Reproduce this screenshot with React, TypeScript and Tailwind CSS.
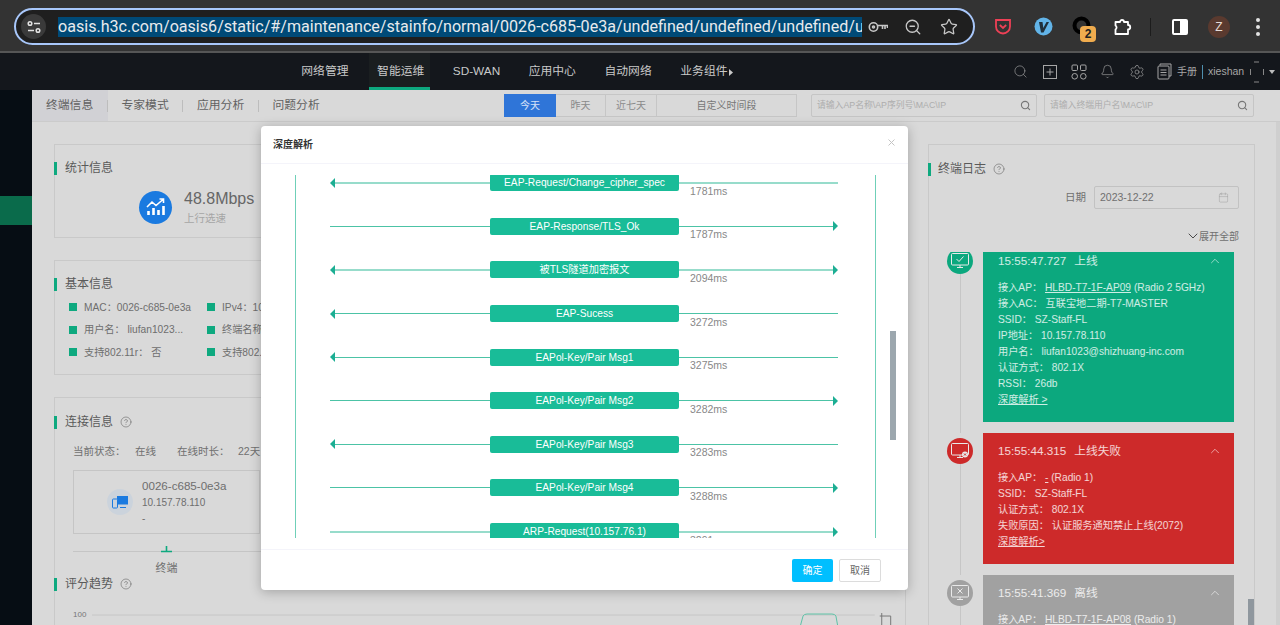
import { ZoomOut, Star, Search, Bell, Settings, ChevronUp, ChevronDown, Calendar, CircleHelp } from "lucide-react";

const font = { fontFamily: '"Liberation Sans", "Noto Sans CJK SC", sans-serif' };

const flows = [
  { label: "EAP-Request/Change_cipher_spec", ms: "1781ms", left: true, right: false, thick: true },
  { label: "EAP-Response/TLS_Ok", ms: "1787ms", left: false, right: true, thick: false },
  { label: "被TLS隧道加密报文", ms: "2094ms", left: true, right: true, thick: true },
  { label: "EAP-Sucess", ms: "3272ms", left: true, right: false, thick: false },
  { label: "EAPol-Key/Pair Msg1", ms: "3275ms", left: true, right: false, thick: false },
  { label: "EAPol-Key/Pair Msg2", ms: "3282ms", left: false, right: true, thick: false },
  { label: "EAPol-Key/Pair Msg3", ms: "3283ms", left: true, right: false, thick: false },
  { label: "EAPol-Key/Pair Msg4", ms: "3288ms", left: false, right: true, thick: false },
  { label: "ARP-Request(10.157.76.1)", ms: "3291ms", left: false, right: true, thick: true },
];

function Arrow({ dir }: { dir: "l" | "r" }) {
  return (
    <svg width="5" height="10" viewBox="0 0 5 10" className="shrink-0">
      <path d={dir === "l" ? "M5 0 L0 5 L5 10 Z" : "M0 0 L5 5 L0 10 Z"} fill="#1cae93" />
    </svg>
  );
}

function SectionTitle({ text, help, tight }: { text: string; help?: boolean; tight?: boolean }) {
  return (
    <div className="flex items-center h-[14px] -ml-px">
      <div className="w-[3px] h-[13px] bg-[#0ea97f]" />
      <span className={`text-[12px] leading-[14px] text-[#5a5a5a] ${tight ? "ml-[7px]" : "ml-2"}`}>{text}</span>
      {help && <CircleHelp size={12} strokeWidth={1.2} className="ml-[7px] text-[#666]" />}
    </div>
  );
}

function InfoItem({ text }: { text: string }) {
  return (
    <div className="flex items-center w-[138px] h-[22.5px] whitespace-nowrap shrink-0">
      <div className="w-2 h-2 bg-[#0ea97f] shrink-0" />
      <span className="ml-[7px] text-[10.2px] text-[#6e6e6e]">{text}</span>
    </div>
  );
}

function LogCard({
  time,
  title,
  rows,
  color,
  circle,
  mark,
}: {
  time: string;
  title: string;
  rows: React.ReactNode[];
  color: string;
  circle: string;
  mark: "ok" | "fail" | "off";
}) {
  return (
    <div className="flex pb-[11px]">
      <div className="w-[26px] flex flex-col items-center shrink-0">
        <div className={`w-[26px] h-[26px] rounded-full mt-[5px] flex items-center justify-center shrink-0 ${circle}`}>
          <svg width="18" height="16" viewBox="0 0 18 16" fill="none" stroke="#e9e9e9" strokeWidth="1">
            <rect x="0.5" y="0.5" width="17" height="11.5" rx="1" />
            <path d="M6 14.5 H12 M9 12 V14.5" />
            {mark === "ok" && <path d="M5.5 6 L8 8.5 L12.5 3.5" />}
            {mark === "off" && <path d="M6.5 3.5 L11.5 8.5 M11.5 3.5 L6.5 8.5" />}
            {mark === "fail" && <circle cx="14" cy="11.5" r="3" fill="#e9e9e9" stroke="none" />}
            {mark === "fail" && <path d="M13 10.5 L15 12.5 M15 10.5 L13 12.5" stroke="#cd2a2a" />}
          </svg>
        </div>
        <div className="w-px flex-1 bg-[#c6c6c6] -mb-[11px]" />
      </div>
      <div className={`ml-[10px] w-[251px] px-[15px] pb-[14px] text-white/80 ${color}`}>
        <div className="h-[37px] pb-px flex items-center justify-between text-[11.7px]">
          <span>
            {time}
            <span className="ml-2">{title}</span>
          </span>
          <ChevronUp size={14} strokeWidth={1.2} className="-mr-[3px]" />
        </div>
        <div className="text-[10.2px] leading-4 whitespace-nowrap">
          {rows.map((r, i) => (
            <div key={i}>{r}</div>
          ))}
        </div>
      </div>
    </div>
  );
}

export default function App() {
  return (
    <div style={font} className="w-[1280px] h-[625px] overflow-hidden relative bg-[#d9d9d9]">
      {/* chrome toolbar */}
      <div className="h-[53px] bg-[#333333] border-b-2 border-[#565656] pt-[2px] flex items-center">
        <div className="ml-[14px] w-[961px] h-[37px] rounded-full border-2 border-[#a8c7fa] bg-[#1f1f1f] flex items-center">
          <div className="ml-[5px] w-[25px] h-[25px] rounded-full bg-[#3a3a3a] flex items-center justify-center shrink-0">
            <svg width="14" height="14" viewBox="0 0 14 14" fill="none" stroke="#e3e3e3" strokeWidth="1.5">
              <circle cx="3" cy="3.5" r="1.8" />
              <path d="M7 3.5 H13 M1 10.5 H7" />
              <circle cx="11" cy="10.5" r="1.8" />
            </svg>
          </div>
          <div className="ml-3 w-[804px] h-[20px] bg-[#004a77] overflow-hidden shrink-0">
            <div className="text-[16.1px] leading-[20px] text-[#e8eaed] whitespace-nowrap" style={{ fontFamily: "Roboto, sans-serif" }}>
              oasis.h3c.com/oasis6/static/#/maintenance/stainfo/normal/0026-c685-0e3a/undefined/undefined/undefined/undefined
            </div>
          </div>
          <svg width="20" height="12" viewBox="0 0 20 12" fill="none" stroke="#c7c7c7" strokeWidth="1.6" className="ml-[6px] shrink-0">
            <circle cx="5.5" cy="6" r="4.2" />
            <circle cx="5.5" cy="6" r="1" />
            <path d="M10 4.5 H19.5 V7 M14.5 4.5 V8 M17 4.5 V8" />
          </svg>
          <ZoomOut size={18} strokeWidth={1.7} className="ml-[16px] text-[#c7c7c7] shrink-0" />
          <Star size={18} strokeWidth={1.7} className="ml-[18px] text-[#c7c7c7] shrink-0" />
        </div>
        <div className="ml-[16px] w-6 h-6 flex items-center justify-center shrink-0">
          <svg width="18" height="18" viewBox="0 0 18 18" fill="none" stroke="#ee4056" strokeWidth="1.8">
            <path d="M2 2 H16 V8.5 A7 7 0 0 1 2 8.5 Z" />
            <path d="M5.8 7 L9 10 L12.2 7" />
          </svg>
        </div>
        <div className="ml-4 w-6 h-6 flex items-center justify-center shrink-0">
          <svg width="19" height="19" viewBox="0 0 19 19">
            <circle cx="9.5" cy="9.5" r="9" fill="#62b4e8" />
            <path d="M5 5 H8.5 L9.3 11 L12.5 5 H15 L9.5 15.5 H7 Z" fill="#20303c" />
          </svg>
        </div>
        <div className="ml-4 w-6 h-6 relative shrink-0">
          <svg width="19" height="19" viewBox="0 0 19 19" className="absolute left-[1px] top-[1px]">
            <circle cx="9.5" cy="9.5" r="7" fill="none" stroke="#000" strokeWidth="4" />
          </svg>
          <div className="absolute left-[9px] top-[11px] w-4 h-4 rounded-[4px] bg-[#f0ac4e] text-[#222] text-[12px] font-bold leading-4 text-center">2</div>
        </div>
        <div className="ml-4 w-6 h-6 flex items-center justify-center shrink-0">
          <svg width="18" height="18" viewBox="0 0 18 18" fill="none" stroke="#fff" strokeWidth="1.8" strokeLinejoin="round">
            <path d="M1.5 4 H6 A2 2 0 0 1 10 4 H14 V7 A2 2 0 0 1 14 11.5 V16 H1.5 V11.5 A2.4 2.4 0 0 0 1.5 7.5 Z" />
          </svg>
        </div>
        <div className="ml-[15px] w-px h-[18px] bg-[#1c1c1c] shrink-0" />
        <div className="ml-[17px] w-6 h-6 flex items-center justify-center shrink-0">
          <div className="w-4 h-4 rounded-[2px] border-2 border-white flex justify-end">
            <div className="w-[6px] bg-white" />
          </div>
        </div>
        <div className="ml-4 w-[22px] h-[22px] rounded-full bg-[#5a3a2f] text-[#e6dcd8] text-[12px] leading-[22px] text-center shrink-0">Z</div>
        <div className="ml-[26px] flex flex-col gap-[3px] shrink-0">
          <div className="w-1 h-1 rounded-full bg-[#e3e3e3]" />
          <div className="w-1 h-1 rounded-full bg-[#e3e3e3]" />
          <div className="w-1 h-1 rounded-full bg-[#e3e3e3]" />
        </div>
      </div>

      {/* app nav */}
      <div className="h-[37px] bg-[#14171c] flex pl-[287px] text-[11.8px] text-[#c9c9c9]">
        {["网络管理", "智能运维", "SD-WAN", "应用中心", "自动网络", "业务组件"].map((item, i) => (
          <div key={item} className="w-[75.8px] flex justify-center">
            <div className={`flex items-center justify-center whitespace-nowrap relative ${i === 1 ? "w-[61px] mr-[2px] pl-[2px] bg-[#1a1e20] border-b-[3px] border-[#0ea97f] pt-[3px]" : ""}`}>
              {item}
              {i === 5 && (
                <svg width="4" height="7" viewBox="0 0 4 7" className="absolute -right-[6px] top-[16px]">
                  <path d="M0 0 L4 3.5 L0 7 Z" fill="#c9c9c9" />
                </svg>
              )}
            </div>
          </div>
        ))}
        <div className="ml-auto w-[274px] flex items-center text-[#a6a6a6]">
          <div className="w-[29px] flex justify-center"><Search size={15} strokeWidth={1} /></div>
          <div className="w-[29px] flex justify-center">
            <svg width="14" height="14" viewBox="0 0 14 14" fill="none" stroke="currentColor">
              <rect x="0.5" y="0.5" width="13" height="13" />
              <path d="M7 3.5 V10.5 M3.5 7 H10.5" />
            </svg>
          </div>
          <div className="w-[29px] flex justify-center">
            <svg width="16" height="16" viewBox="0 0 16 16" fill="none" stroke="currentColor">
              <rect x="1" y="1" width="5.5" height="5.5" rx="1" />
              <rect x="9.5" y="1" width="5.5" height="5.5" rx="1" />
              <circle cx="3.7" cy="12.3" r="2.8" />
              <circle cx="12.3" cy="12.3" r="2.8" />
            </svg>
          </div>
          <div className="w-[29px] flex justify-center"><Bell size={15} strokeWidth={1} /></div>
          <div className="w-[29px] flex justify-center"><Settings size={16} strokeWidth={1} /></div>
          <div className="w-[26px] flex justify-center">
            <svg width="15" height="17" viewBox="0 0 15 17" fill="none" stroke="currentColor">
              <path d="M3 2.5 V1 H14 V13 H12" />
              <rect x="1" y="3" width="11" height="13" rx="1" />
              <path d="M3.5 7 H9.5 M3.5 9.5 H9.5 M3.5 12 H9.5" />
            </svg>
          </div>
          <span className="text-[10px] w-5">手册</span>
          <div className="ml-[5px] w-px h-[14px] bg-[#4f8fae]" />
          <span className="ml-[5px] text-[10.5px] w-[36px]">xieshan</span>
          <svg width="14" height="22" viewBox="0 0 14 22" fill="none" stroke="#888" className="ml-[6px]">
            <path d="M4 1 H9 M4 21 H9 M0.5 8 V14 M13.5 8 V14" />
          </svg>
          <svg width="6" height="4" viewBox="0 0 6 4" className="ml-[5px]">
            <path d="M0 0 H6 L3 4 Z" fill="#bdbdbd" />
          </svg>
        </div>
      </div>

      {/* page */}
      <div className="flex h-[535px]">
        <div className="w-8 bg-[#060d14] pt-[106px] shrink-0">
          <div className="h-[29px] bg-[#0a6b4b]" />
        </div>
        <div className="flex-1 flex flex-col">
          <div className="h-8 border-b border-[#cbcbcb] flex items-start shrink-0">
            {["终端信息", "专家模式", "应用分析", "问题分析"].map((tab, i) => (
              <div key={tab} className={`w-[75.5px] h-[31px] flex items-center justify-between pl-[14px] text-[11.8px] text-[#626262] ${i === 0 ? "bg-[#d1d1d5]" : ""}`}>
                {tab}
                {i < 3 && <div className="w-px h-3 bg-[#bdbdbd]" />}
              </div>
            ))}
            <div className="ml-[170px] mt-1 flex h-[23px] text-[10px] text-[#8a8a8a]">
              <div className="w-[52px] bg-[#2f75d8] text-white/80 flex items-center justify-center">今天</div>
              <div className="w-[50px] border border-l-0 border-[#c6c6c6] flex items-center justify-center">昨天</div>
              <div className="w-[51px] border border-l-0 border-[#c6c6c6] flex items-center justify-center">近七天</div>
              <div className="w-[140px] border border-l-0 border-[#c6c6c6] flex items-center justify-center text-[#777]">自定义时间段</div>
            </div>
            <div className="ml-[14px] mt-1 w-[226px] h-[23px] border border-[#c5c5c5] rounded-[2px] flex items-center justify-between px-[5px] text-[8.8px] text-[#adadad]">
              请输入AP名称\AP序列号\MAC\IP
              <Search size={11} strokeWidth={2.4} className="text-[#777]" />
            </div>
            <div className="ml-[7px] mt-1 w-[210px] h-[23px] border border-[#c5c5c5] rounded-[2px] flex items-center justify-between px-[5px] text-[8.8px] text-[#adadad]">
              请输入终端用户名\MAC\IP
              <Search size={11} strokeWidth={2.4} className="text-[#777]" />
            </div>
          </div>

          <div className="flex-1 flex pl-[22px] pt-[22px] overflow-hidden">
            <div className="w-[852px] flex flex-col shrink-0">
              <div className="h-[94px] border border-[#c9c9c9] pt-4 shrink-0">
                <SectionTitle text="统计信息" />
                <div className="flex items-center ml-[84px] mt-[14px]">
                  <div className="w-[33px] h-[33px] rounded-full bg-[#1a7ae0] flex items-center justify-center">
                    <svg width="20" height="18" viewBox="0 0 20 18" fill="none" stroke="#fff">
                      <path d="M1 9 L6 4 L10 7.5 L17 1.5 M13.5 1 H17.5 V5" strokeWidth="1.6" />
                      <path d="M2.5 13 V17 M7.5 10 V17 M12.5 12 V17 M17.5 8 V17" strokeWidth="2.6" />
                    </svg>
                  </div>
                  <div className="ml-3">
                    <div className="text-[16px] leading-[20px] text-[#666]">48.8Mbps</div>
                    <div className="text-[10.5px] leading-[14px] mt-[2px] text-[#a5a5a5]">上行选速</div>
                  </div>
                </div>
              </div>

              <div className="h-[115px] mt-[22px] border border-[#c9c9c9] pt-4 shrink-0">
                <SectionTitle text="基本信息" />
                <div className="ml-[14px] mt-[5px] flex flex-wrap w-[414px]">
                  <InfoItem text="MAC：0026-c685-0e3a" />
                  <InfoItem text="IPv4：10.157.78.110" />
                  <InfoItem text="IPv6：-" />
                  <InfoItem text="用户名： liufan1023..." />
                  <InfoItem text="终端名称：-" />
                  <InfoItem text="终端类型：-" />
                  <InfoItem text="支持802.11r： 否" />
                  <InfoItem text="支持802.11k：否" />
                  <InfoItem text="支持802.11v：否" />
                </div>
              </div>

              <div className="flex-1 mt-[22px] border border-b-0 border-[#c9c9c9] pt-[17px]">
                <SectionTitle text="连接信息" help />
                <div className="ml-[18px] mt-[17px] h-3 flex items-center text-[10.5px] text-[#707070] whitespace-nowrap">
                  <span className="w-[62px]">当前状态：</span>
                  <span className="w-[42px]">在线</span>
                  <span className="w-[61px]">在线时长：</span>
                  <span>22天</span>
                </div>
                <div className="ml-[18px] mt-3 w-[187px] h-[64px] border border-[#c5c5c5] flex items-center pl-[33px]">
                  <div className="w-[26px] h-[26px] rounded-full bg-[#cbd3dc] flex items-center justify-center">
                    <svg width="16" height="13" viewBox="0 0 16 13">
                      <rect x="5" y="0" width="11" height="8.5" fill="#1a7ae0" />
                      <rect x="0.5" y="3" width="5" height="9" rx="0.8" fill="#cbd3dc" stroke="#1a7ae0" />
                      <path d="M8 11.5 H14" stroke="#1a7ae0" />
                    </svg>
                  </div>
                  <div className="ml-[9px] text-[#6e6e6e]">
                    <div className="text-[11.6px] leading-[16px]">0026-c685-0e3a</div>
                    <div className="text-[10px] leading-[16px] mt-px">10.157.78.110</div>
                    <div className="text-[10px] leading-[16px]">-</div>
                  </div>
                </div>
                <div className="ml-[18px] mt-3 h-[6px] border-b border-[#c5c5c5] relative">
                  <svg width="11" height="7" viewBox="0 0 11 7" className="absolute left-[88px] top-0">
                    <path d="M5.5 0 V5 M0 5.5 H11" stroke="#0ea97f" strokeWidth="1.6" fill="none" />
                  </svg>
                </div>
                <div className="ml-[18px] w-[187px] mt-[10px] text-[11px] leading-3 text-[#707070] text-center">终端</div>
                <div className="mt-[3px]">
                  <SectionTitle text="评分趋势" help />
                </div>
                <div className="ml-[18px] mt-[18px] flex items-start">
                  <span className="text-[8px] leading-[12px] text-[#777]">100</span>
                  <svg width="816" height="14" viewBox="0 0 816 14" fill="none" className="ml-[6px] mt-[4px]">
                    <path d="M0 2 H786" stroke="#c8c8c8" />
                    <path d="M711 14 L714 3 Q715 1 718 1 H743 Q746 1 747 3 L749 14" stroke="#5cc2a6" />
                    <path d="M791 3 H802 V14 H793 V0" stroke="#777" />
                  </svg>
                </div>
              </div>
            </div>

            <div className="w-[327px] ml-[22px] border border-b-0 border-[#c9c9c9] pt-[17px] flex flex-col shrink-0">
              <SectionTitle text="终端日志" help tight />
              <div className="mt-[10px] flex justify-end items-center pr-[15px]">
                <span className="text-[10.5px] text-[#707070]">日期</span>
                <div className="ml-2 w-[145px] h-[23px] border border-[#c2c2c2] rounded-[2px] flex items-center justify-between px-[5px] text-[10.5px] text-[#707070]">
                  2023-12-22
                  <Calendar size={11} strokeWidth={1} className="text-[#999] mr-[4px]" />
                </div>
              </div>
              <div className="mt-5 h-[14px] flex justify-end items-center pr-[15px] text-[10px] text-[#707070]">
                <ChevronDown size={16} strokeWidth={1.3} className="text-[#333] -mr-[2px]" />
                展开全部
              </div>
              <div className="mt-[9px] flex-1 overflow-hidden pl-[18px] relative">
                <div className="-mt-[9px]">
                  <LogCard
                    time="15:55:47.727"
                    title="上线"
                    color="bg-[#0ca87e]"
                    circle="bg-[#0ca87e]"
                    mark="ok"
                    rows={[
                      <>接入AP：&nbsp;<u>HLBD-T7-1F-AP09</u> (Radio 2 5GHz)</>,
                      <>接入AC：&nbsp;互联宝地二期-T7-MASTER</>,
                      <>SSID：&nbsp;SZ-Staff-FL</>,
                      <>IP地址：&nbsp;10.157.78.110</>,
                      <>用户名：&nbsp;liufan1023@shizhuang-inc.com</>,
                      <>认证方式：&nbsp;802.1X</>,
                      <>RSSI：&nbsp;26db</>,
                      <u>深度解析 &gt;</u>,
                    ]}
                  />
                  <LogCard
                    time="15:55:44.315"
                    title="上线失败"
                    color="bg-[#cd2a2a]"
                    circle="bg-[#cd2a2a]"
                    mark="fail"
                    rows={[
                      <>接入AP：&nbsp;<u>-</u> (Radio 1)</>,
                      <>SSID：&nbsp;SZ-Staff-FL</>,
                      <>认证方式：&nbsp;802.1X</>,
                      <>失败原因：&nbsp;认证服务通知禁止上线(2072)</>,
                      <u>深度解析&gt;</u>,
                    ]}
                  />
                  <LogCard
                    time="15:55:41.369"
                    title="离线"
                    color="bg-[#a1a1a1]"
                    circle="bg-[#a1a1a1]"
                    mark="off"
                    rows={[<>接入AP：&nbsp;<u>HLBD-T7-1F-AP08</u> (Radio 1)</>]}
                  />
                </div>
                <div className="absolute right-0 top-[347px] w-[6px] h-[26px] bg-[#8f979e]" />
              </div>
            </div>
            <div className="ml-auto w-[4px] -mt-[22px] bg-[#cfcfcf]" />
          </div>
        </div>
      </div>

      {/* modal */}
      <div className="absolute left-[261px] top-[126px] w-[647px] h-[464px] bg-white rounded-[4px] shadow-[0_2px_12px_rgba(0,0,0,0.25)] flex flex-col">
        <div className="h-[38px] border-b border-[#f4f4fa] flex items-center justify-between px-3 shrink-0">
          <span className="text-[10px] text-[#333] font-bold">深度解析</span>
          <svg width="7" height="7" viewBox="0 0 7 7" stroke="#c4c4c4" className="mr-[1px] mb-1">
            <path d="M0.5 0.5 L6.5 6.5 M6.5 0.5 L0.5 6.5" />
          </svg>
        </div>
        <div className="flex-1 pt-[11px] relative">
          <div className="ml-[34px] w-[581px] h-[363px] border-x border-[#6fd0b8] overflow-hidden">
            <div className="-mt-[14px]">
              {flows.map((f) => (
                <div key={f.label} className="h-[43.6px] ml-[34px] w-[508px] flex items-center">
                  <div className="w-[160px] flex items-center shrink-0">
                    {f.left && <Arrow dir="l" />}
                    <div className={`flex-1 ${f.thick ? "h-[2px] bg-[#97dccb]" : "h-px bg-[#4cc3a6]"}`} />
                  </div>
                  <div className="w-[189px] h-[17px] rounded-[2px] bg-[#19bc98] text-white text-[10.2px] leading-[17px] text-center shrink-0 whitespace-nowrap">
                    {f.label}
                  </div>
                  <div className="w-[159px] flex items-center relative shrink-0">
                    <div className={`flex-1 ${f.thick ? "h-[2px] bg-[#97dccb]" : "h-px bg-[#4cc3a6]"}`} />
                    {f.right && <Arrow dir="r" />}
                    <span className="absolute left-[11px] top-[calc(50%+2px)] text-[10.5px] leading-3 text-[#888]">{f.ms}</span>
                  </div>
                </div>
              ))}
            </div>
          </div>
          <div className="absolute left-[629px] top-[167px] w-[6px] h-[109px] bg-[#9ca7ae]" />
        </div>
        <div className="h-[41px] border-t border-[#f4f4fa] flex justify-end items-start pt-[9px] pr-[27px] shrink-0">
          <div className="w-[41px] h-[23px] rounded-[2px] bg-[#00bfff] text-white text-[10px] leading-[23px] text-center">确定</div>
          <div className="ml-[6px] w-[42px] h-[23px] rounded-[2px] border border-[#dcdcdc] text-[#666] text-[10px] leading-[21px] text-center">取消</div>
        </div>
      </div>
    </div>
  );
}
